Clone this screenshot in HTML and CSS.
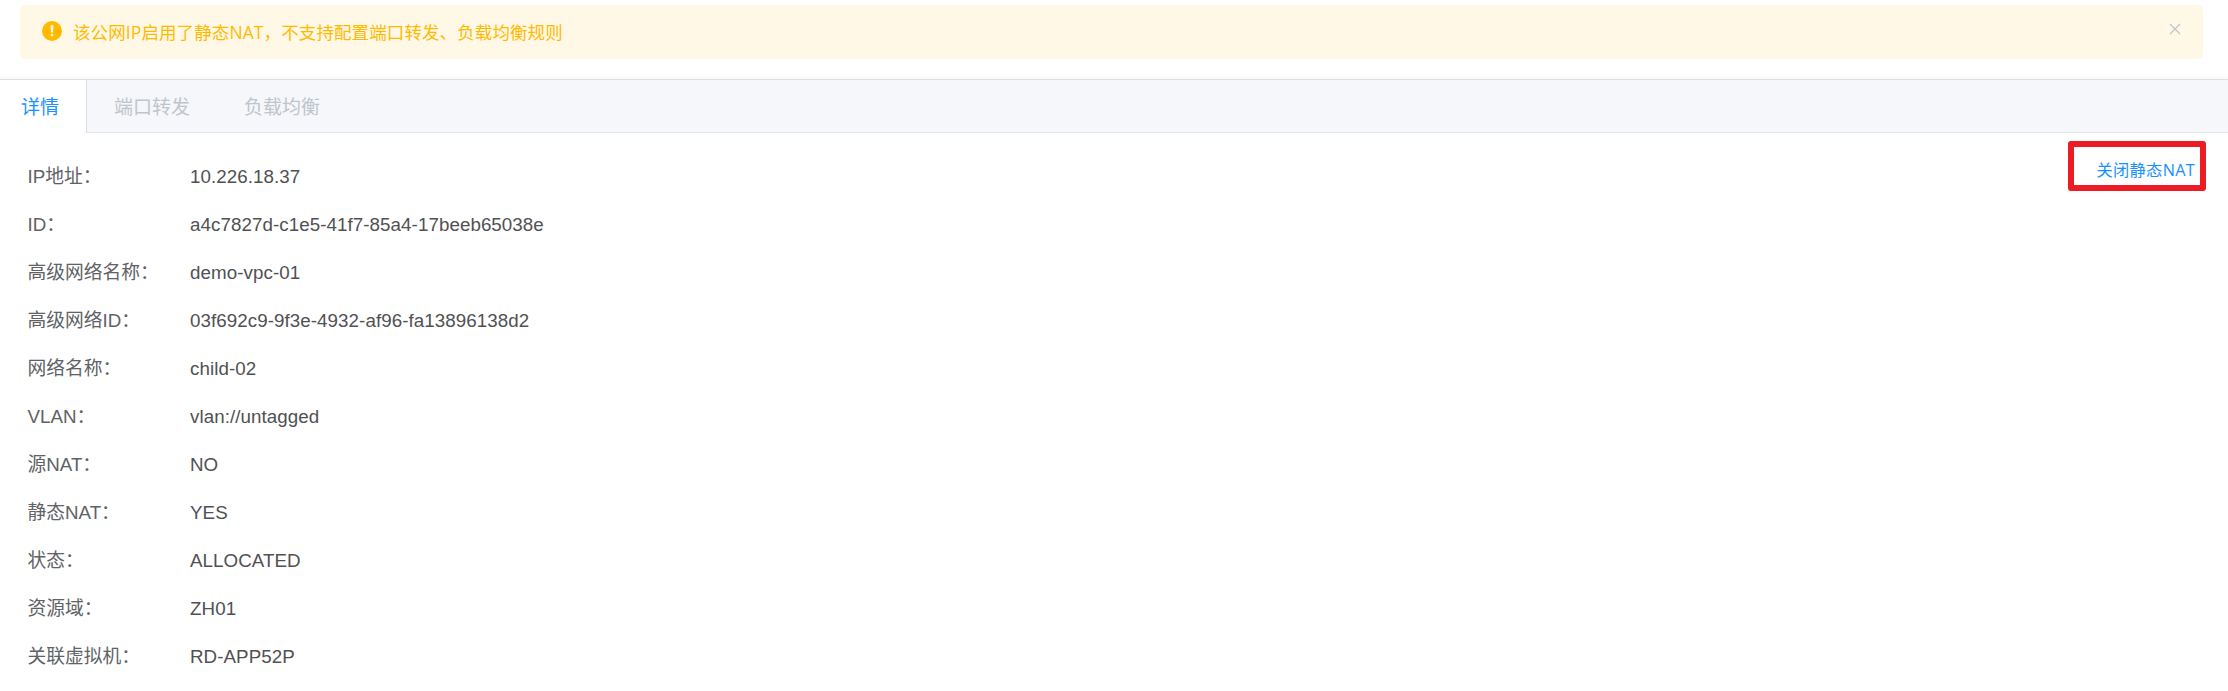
FILE: index.html
```html
<!DOCTYPE html>
<html lang="zh-CN">
<head>
<meta charset="utf-8">
<title>公网IP详情</title>
<link rel="stylesheet" href="styles.css">
</head>
<body>
<div class="alert">
  <svg class="alert-icon" viewBox="0 0 20 20"><circle cx="10" cy="10" r="10" fill="#ffba00"/><path d="M8.5 5.2a1.5 1.5 0 0 1 3 0l-.5 5.6a1 1 0 0 1-2 0z" fill="#fff8e6"/><circle cx="10" cy="14.1" r="1.4" fill="#fff8e6"/></svg>
  <span class="alert-text">该公网IP启用了静态NAT，不支持配置端口转发、负载均衡规则</span>
  <svg class="alert-close" viewBox="0 0 12 12"><path d="M1 1l10 10M11 1L1 11" stroke="#c0c4cc" stroke-width="1.3"/></svg>
</div>
<nav class="tabs">
  <span class="tab active">详情</span>
  <span class="tab">端口转发</span>
  <span class="tab">负载均衡</span>
</nav>
<main class="content">
  <dl class="details">
    <dt>IP地址：</dt><dd>10.226.18.37</dd>
    <dt>ID：</dt><dd>a4c7827d-c1e5-41f7-85a4-17beeb65038e</dd>
    <dt>高级网络名称：</dt><dd>demo-vpc-01</dd>
    <dt>高级网络ID：</dt><dd>03f692c9-9f3e-4932-af96-fa13896138d2</dd>
    <dt>网络名称：</dt><dd>child-02</dd>
    <dt>VLAN：</dt><dd>vlan://untagged</dd>
    <dt>源NAT：</dt><dd>NO</dd>
    <dt>静态NAT：</dt><dd>YES</dd>
    <dt>状态：</dt><dd>ALLOCATED</dd>
    <dt>资源域：</dt><dd>ZH01</dd>
    <dt>关联虚拟机：</dt><dd>RD-APP52P</dd>
  </dl>
  <div class="action"><a class="link">关闭静态NAT</a></div>
</main>
</body>
</html>
```
FILE: styles.css
```css
* { box-sizing: border-box; }
body {
  margin: 0;
  height: 691px;
  overflow: hidden;
  background: #fff;
  font-family: "Liberation Sans", "Noto Sans CJK SC", sans-serif;
  font-size: 18.75px;
  font-weight: 400;
}
.alert {
  display: flex;
  align-items: flex-start;
  height: 54px;
  margin: 5px 25px 20px 20px;
  padding: 0 22px 0 22px;
  border-radius: 5px;
  background: #fff8e6;
  color: #ffba00;
}
.alert-icon { width: 20px; height: 20px; margin-top: 16px; }
.alert-text {
  flex: 1;
  margin-left: 11px;
  font-family: "Open Sans", "Noto Sans CJK SC", sans-serif;
  font-size: 17.5px;
  letter-spacing: .1px;
  line-height: 54px;
}
.alert-close { width: 12px; height: 12px; margin-top: 18px; }
.tabs {
  display: flex;
  height: 54px;
  border-top: 1px solid #dcdfe6;
  border-bottom: 1px solid #dfe4ed;
  background: #f5f7fa;
  box-shadow: 0 -2px 5px rgba(0, 0, 0, .04);
}
.tab {
  padding: 0 27px;
  font-size: 19px;
  line-height: 55px;
  color: #c0c4cc;
}
.tab.active {
  width: 87px;
  height: 53px;
  padding: 0 0 0 21px;
  border-right: 1px solid #dcdfe6;
  background: #fff;
  color: #1890ff;
}
.content {
  display: flex;
  justify-content: space-between;
  padding: 0 22px 0 27.5px;
}
.details {
  display: grid;
  grid-template-columns: 162.5px auto;
  grid-auto-rows: 48px;
  margin: 20px 0 0;
  line-height: 48px;
  white-space: nowrap;
}
dt { color: #606266; }
dd { margin: 0; color: #505153; letter-spacing: .07px; }
.action {
  width: 138px;
  height: 50px;
  margin-top: 8px;
  border: 6px solid #ed1c24;
  border-radius: 3px;
  text-align: right;
  padding-right: 5px;
}
.link {
  font-family: "Open Sans", "Noto Sans CJK SC", sans-serif;
  font-size: 16.25px;
  letter-spacing: .3px;
  line-height: 46px;
  color: #1890ff;
  white-space: nowrap;
}
```
